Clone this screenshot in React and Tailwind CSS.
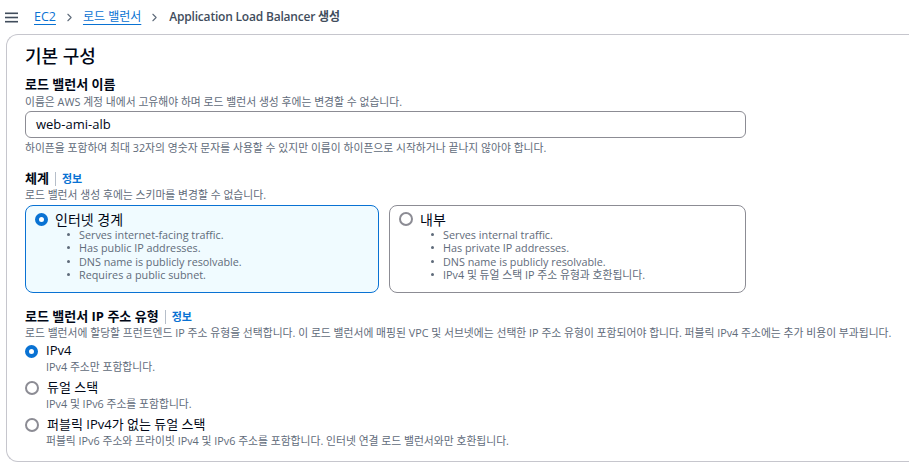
import { ChevronRight } from 'lucide-react'

const font = { fontFamily: '"Open Sans", "Noto Sans CJK KR", sans-serif' }

function Radio({ checked }) {
  return checked ? (
    <span className="inline-block w-[13px] h-[13px] rounded-full border-[4px] border-[#0972d3] bg-white shrink-0" />
  ) : (
    <span className="inline-block w-[14px] h-[14px] rounded-full border-2 border-[#8c8c94] bg-white shrink-0" />
  )
}

function SchemeCard({ checked, title, items, className = '' }) {
  return (
    <div
      className={
        'h-[88px] rounded-lg border pl-[9px] pt-[4px] ' +
        (checked ? 'border-[#0972d3] bg-[#f0fbff] ' : 'border-[#8c8c94] bg-white ') +
        className
      }
    >
      <div className="flex items-center gap-[7px] h-[18px]">
        <Radio checked={checked} />
        <span className="text-[14px] text-[#000716]">{title}</span>
      </div>
      <ul className="pl-[32px] text-[10.8px] leading-[13.3px] text-[#5f6b7a]">
        {items.map((t, i) => (
          <li key={i} className="flex items-center">
            <span className="w-[3px] h-[3px] rounded-full bg-[#5f6b7a] mr-[9px]" />
            {t}
          </li>
        ))}
      </ul>
    </div>
  )
}

function Label({ children, info }) {
  return (
    <div className="flex items-center text-[13px] font-bold text-[#000716] h-[18px]">
      {children}
      {info && (
        <>
          <span className="mx-[6px] w-px h-[14px] bg-[#b6bec9]" />
          <span className="text-[11px] font-bold text-[#0972d3]">정보</span>
        </>
      )}
    </div>
  )
}

function Desc({ children, className = '' }) {
  return <div className={'text-[10.8px] text-[#5f6b7a] leading-[14px] ' + className}>{children}</div>
}

function IpOption({ checked, title, desc }) {
  return (
    <div>
      <div className="flex items-center gap-[8px] h-[18px]">
        <Radio checked={checked} />
        <span className="text-[13px] text-[#000716]">{title}</span>
      </div>
      <Desc className="pl-[21px]">{desc}</Desc>
    </div>
  )
}

export default function App() {
  return (
    <div className="w-[909px] h-[464px] bg-white overflow-hidden" style={font}>
      <div className="h-[34px] flex items-center pl-[5px] text-[12px]">
        <svg width="13" height="11" viewBox="0 0 13 11" className="mr-[16px]">
          <rect x="0" y="0.5" width="13" height="1.6" fill="#414d5c" />
          <rect x="0" y="4.7" width="13" height="1.6" fill="#414d5c" />
          <rect x="0" y="8.9" width="13" height="1.6" fill="#414d5c" />
        </svg>
        <span className="text-[#0972d3] text-[12.5px] underline underline-offset-[3px]">EC2</span>
        <ChevronRight className="w-[13px] h-[13px] mx-[7px] text-[#5f6b7a]" strokeWidth={2} />
        <span className="text-[#0972d3] underline underline-offset-[3px]">로드 밸런서</span>
        <ChevronRight className="w-[13px] h-[13px] ml-[7px] mr-[8px] text-[#5f6b7a]" strokeWidth={2} />
        <span className="text-[#414d5c] font-semibold tracking-[-0.2px]">Application Load Balancer 생성</span>
      </div>
      <div className="ml-[6px] h-[428px] border-l border-t border-b border-[#c6c6cd] rounded-tl-[12px] rounded-bl-[12px] pl-[18px] pt-[8px]">
        <div className="text-[18px] text-[#000716] font-medium h-[26px] leading-[26px]">기본 구성</div>
        <div className="mt-[7px]">
          <Label>로드 밸런서 이름</Label>
          <Desc className="mt-[1px]">이름은 AWS 계정 내에서 고유해야 하며 로드 밸런서 생성 후에는 변경할 수 없습니다.</Desc>
          <div className="mt-[2px] w-[721px] h-[27px] rounded-md border border-[#8c8c94] flex items-center px-[10px] text-[13px] text-[#000716]">
            web-ami-alb
          </div>
          <Desc className="mt-[3px]">하이픈을 포함하여 최대 32자의 영숫자 문자를 사용할 수 있지만 이름이 하이픈으로 시작하거나 끝나지 않아야 합니다.</Desc>
        </div>
        <div className="mt-[15px]">
          <Label info>체계</Label>
          <Desc>로드 밸런서 생성 후에는 스키마를 변경할 수 없습니다.</Desc>
          <div className="mt-[3px] w-[721px] flex gap-[10px]">
            <SchemeCard
              checked
              className="w-[354px]"
              title="인터넷 경계"
              items={[
                'Serves internet-facing traffic.',
                'Has public IP addresses.',
                'DNS name is publicly resolvable.',
                'Requires a public subnet.',
              ]}
            />
            <SchemeCard
              className="flex-1"
              title="내부"
              items={[
                'Serves internal traffic.',
                'Has private IP addresses.',
                'DNS name is publicly resolvable.',
                'IPv4 및 듀얼 스택 IP 주소 유형과 호환됩니다.',
              ]}
            />
          </div>
        </div>
        <div className="mt-[15px]">
          <Label info>로드 밸런서 IP 주소 유형</Label>
          <Desc>로드 밸런서에 할당할 프런트엔드 IP 주소 유형을 선택합니다. 이 로드 밸런서에 매핑된 VPC 및 서브넷에는 선택한 IP 주소 유형이 포함되어야 합니다. 퍼블릭 IPv4 주소에는 추가 비용이 부과됩니다.</Desc>
          <div className="mt-[2px] flex flex-col gap-[5px]">
            <IpOption checked title="IPv4" desc="IPv4 주소만 포함합니다." />
            <IpOption title="듀얼 스택" desc="IPv4 및 IPv6 주소를 포함합니다." />
            <IpOption title="퍼블릭 IPv4가 없는 듀얼 스택" desc="퍼블릭 IPv6 주소와 프라이빗 IPv4 및 IPv6 주소를 포함합니다. 인터넷 연결 로드 밸런서와만 호환됩니다." />
          </div>
        </div>
      </div>
    </div>
  )
}
